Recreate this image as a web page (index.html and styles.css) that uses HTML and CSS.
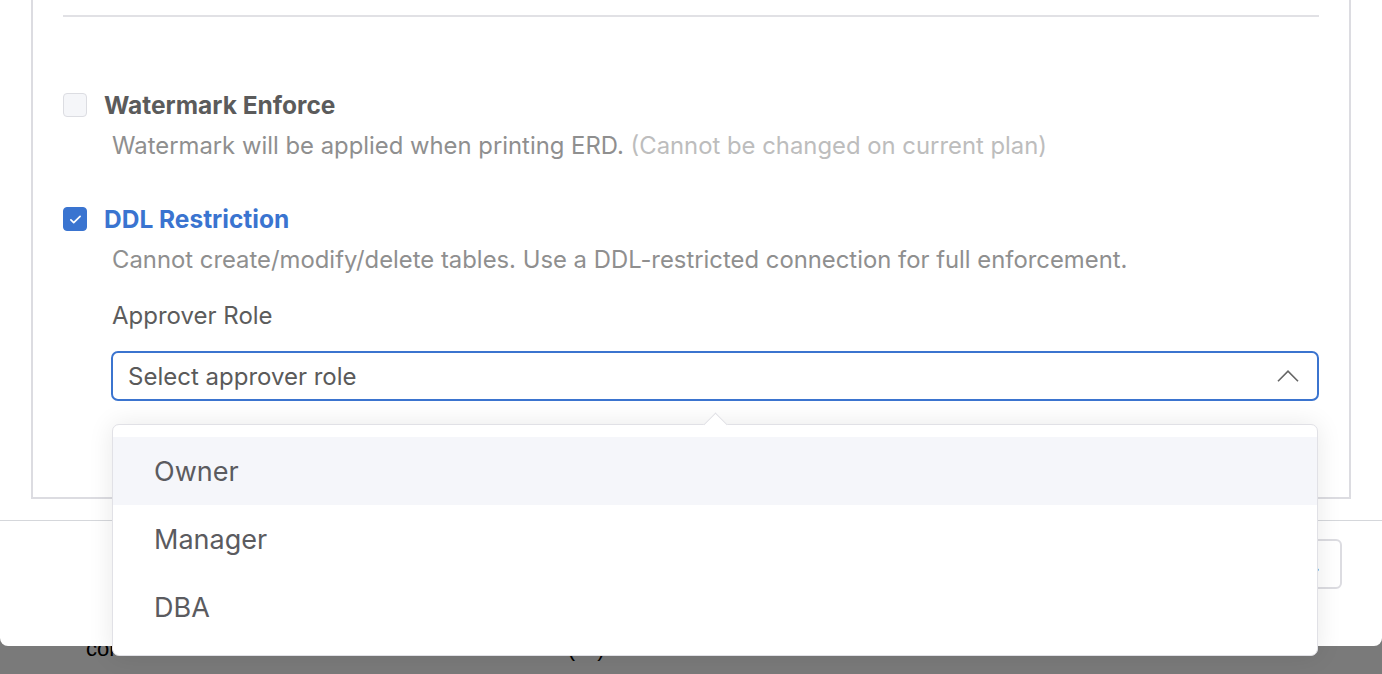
FILE: index.html
```html
<!DOCTYPE html>
<html lang="en">
<head>
<meta charset="utf-8">
<title>Approver settings</title>
<link rel="stylesheet" href="styles.css">
</head>
<body>
<div class="page-behind">
  <p class="behind-text">connection with the database name is listed here (ID) and is shown once more</p>
</div>
<div class="modal">
  <div class="modal-body">
    <div class="card">
      <div class="divider"></div>

      <div class="setting">
        <div class="setting-head">
          <span class="checkbox"></span>
          <span class="setting-title">Watermark Enforce</span>
        </div>
        <p class="setting-desc">Watermark will be applied when printing ERD. <span class="plan-note">(Cannot be changed on current plan)</span></p>
      </div>

      <div class="setting setting-ddl">
        <div class="setting-head">
          <span class="checkbox checked">
            <svg viewBox="0 0 24 24" width="17" height="17"><path d="M5.5 12.5l4 4 9-9" fill="none" stroke="#fff" stroke-width="2.4" stroke-linecap="round" stroke-linejoin="round"/></svg>
          </span>
          <span class="setting-title title-active">DDL Restriction</span>
        </div>
        <p class="setting-desc">Cannot create/modify/delete tables. Use a DDL-restricted connection for full enforcement.</p>

        <div class="field">
          <div class="field-label">Approver Role</div>
          <div class="select-wrap">
            <div class="select">
              <span class="select-placeholder">Select approver role</span>
              <svg class="chevron" viewBox="0 0 22 12" width="22" height="12"><path d="M1 11.2L11 1.2l10 10" fill="none" stroke="#666" stroke-width="1.6"/></svg>
            </div>
            <div class="dropdown">
              <span class="dropdown-arrow"></span>
              <ul class="options">
                <li class="opt opt-active">Owner</li>
                <li class="opt">Manager</li>
                <li class="opt">DBA</li>
              </ul>
            </div>
          </div>
        </div>
      </div>
    </div>
  </div>
  <div class="modal-footer">
    <button class="btn">Save.</button>
  </div>
</div>
</body>
</html>
```

FILE: styles.css
```css
html, body {
  margin: 0;
  padding: 0;
}
body {
  width: 1382px;
  height: 674px;
  overflow: hidden;
  position: relative;
  background: #7a7a7a;
  font-family: Inter, "Noto Sans", "Liberation Sans", sans-serif;
}

.page-behind {
  padding-top: 634px;
  padding-left: 86px;
}
.behind-text {
  margin: 0;
  font-size: 22px;
  line-height: 30px;
  color: #000;
  white-space: nowrap;
  font-family: "Liberation Sans", Arial, sans-serif;
}

.modal {
  position: absolute;
  top: 0;
  left: 0;
  right: 0;
  height: 646px;
  background: #fff;
  border-radius: 0 0 8px 8px;
  overflow: visible;
}

.modal-body {
  padding: 0 31px;
}

.card {
  border: 2px solid #dcdce1;
  border-top: none;
  padding: 15px 30px 0 30px;
  height: 482px;
}

.divider {
  height: 2px;
  background: #e1e1e5;
}

.setting {
  margin-top: 76px;
}
.setting-ddl {
  margin-top: 45px;
}

.setting-head {
  display: flex;
  align-items: center;
  gap: 17px;
  height: 24px;
}

.checkbox {
  width: 22px;
  height: 22px;
  border: 1px solid #dcdde2;
  background: #f5f6f9;
  border-radius: 4px;
  display: flex;
  align-items: center;
  justify-content: center;
  flex: none;
}
.checkbox.checked {
  background: #3a74d0;
  border-color: #3a74d0;
}

.setting-title {
  font-size: 24.5px;
  font-weight: 700;
  color: #5b5b5b;
  line-height: 24px;
}
.title-active {
  color: #3a74d0;
}

.setting-desc {
  margin: 13px 0 0 49px;
  font-size: 23.85px;
  line-height: 32px;
  color: #8f8f8f;
}
.plan-note {
  color: #bdbdbd;
}

.field {
  margin-left: 48px;
  margin-top: 24px;
}
.field-label {
  font-size: 24px;
  line-height: 32px;
  color: #5c5c5c;
  padding-left: 1px;
}

.select-wrap {
  position: relative;
  margin-top: 19px;
}
.select {
  height: 46px;
  border: 2px solid #3b74cf;
  border-radius: 7px;
  display: flex;
  align-items: center;
  justify-content: space-between;
  padding: 0 18px 0 15px;
}
.select-placeholder {
  font-size: 24px;
  color: #5a5a5a;
}
.chevron {
  display: block;
}

.dropdown {
  position: absolute;
  left: 1px;
  top: 73px;
  width: 1204px;
  background: #fff;
  border: 1px solid #e1e1e6;
  border-radius: 7px;
  box-shadow: 0 0 26px rgba(0, 0, 0, 0.09);
  z-index: 5;
}
.dropdown-arrow {
  position: absolute;
  left: 594px;
  top: -9px;
  width: 16px;
  height: 16px;
  background: #fff;
  border-left: 1px solid #e1e1e6;
  border-top: 1px solid #e1e1e6;
  transform: rotate(45deg);
}
.options {
  list-style: none;
  margin: 0;
  padding: 12px 0 14px;
  position: relative;
}
.opt {
  height: 68px;
  line-height: 70px;
  padding-left: 41px;
  font-size: 27px;
  color: #5b5b5f;
}
.opt-active {
  background: #f5f6fa;
}

.modal-footer {
  margin-top: 21px;
  border-top: 1px solid #d5d7db;
  display: flex;
  justify-content: flex-end;
  padding: 18px 40px 0 0;
}
.btn {
  height: 50px;
  border: 2px solid #dcdce1;
  border-radius: 6px;
  background: #fff;
  font-family: Inter, "Noto Sans", sans-serif;
  font-size: 20px;
  color: #555;
  padding: 0 20px 0 24px;
}
```
